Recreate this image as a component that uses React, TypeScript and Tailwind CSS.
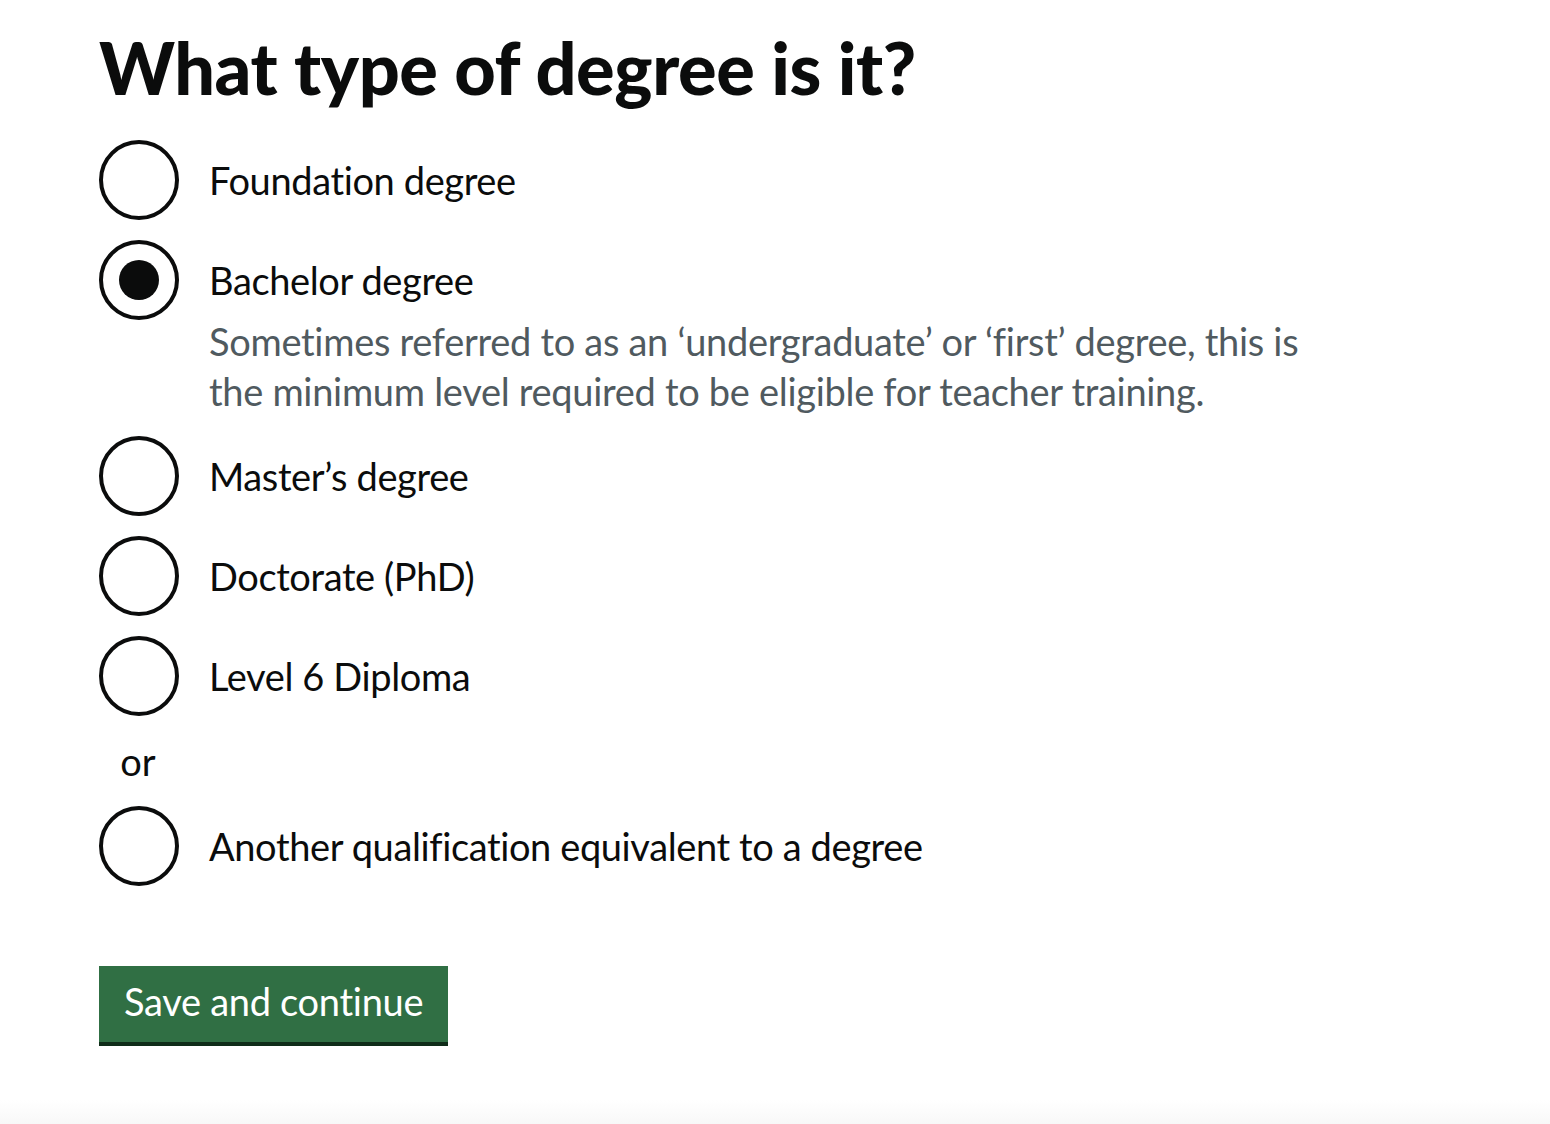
import React from "react";

interface RadioOption {
  label: string;
  hint?: string;
  checked?: boolean;
  dividerBefore?: boolean;
}

const options: RadioOption[] = [
  { label: "Foundation degree" },
  {
    label: "Bachelor degree",
    checked: true,
    hint: "Sometimes referred to as an ‘undergraduate’ or ‘first’ degree, this is the minimum level required to be eligible for teacher training.",
  },
  { label: "Master’s degree" },
  { label: "Doctorate (PhD)" },
  { label: "Level 6 Diploma" },
  { label: "Another qualification equivalent to a degree", dividerBefore: true },
];

function RadioItem({ option }: { option: RadioOption }) {
  return (
    <div className="flex min-h-[80px]">
      <div className="w-[80px] h-[80px] shrink-0 rounded-full border-[4px] border-[#0b0c0c] flex items-center justify-center">
        {option.checked && <div className="w-[40px] h-[40px] rounded-full bg-[#0b0c0c]" />}
      </div>
      <div className="flex flex-col">
        <label className="pl-[30px] pt-[15px] pb-[11px] text-[38px] leading-[50px] tracking-[-0.38px] text-[#0b0c0c]">
          {option.label}
        </label>
        {option.hint && (
          <div className="pl-[30px] w-[1150px] text-[38px] leading-[50px] tracking-[-0.3px] text-[#505a5f]">
            {option.hint}
          </div>
        )}
      </div>
    </div>
  );
}

export default function App() {
  return (
    <div
      className="min-h-[1124px] flex flex-col bg-white text-[#0b0c0c] [font-variant-ligatures:none]"
      style={{ fontFamily: "Lato, 'Noto Sans', sans-serif" }}
    >
      <main className="flex-1 pl-[99px] pt-[27px]">
        <h1 className="text-[72px] leading-[80px] font-black tracking-[-0.4px]">
          What type of degree is it?
        </h1>
        <div className="mt-[33px] flex flex-col gap-[20px]">
          {options.map((option) => (
            <React.Fragment key={option.label}>
              {option.dividerBefore && (
                <div className="w-[80px] text-center text-[38px] leading-[50px] pr-[2px]">or</div>
              )}
              <RadioItem option={option} />
            </React.Fragment>
          ))}
        </div>
        <button className="mt-[80px] h-[76px] px-[25px] pt-[10px] flex items-start bg-[#306f44] text-white text-[38px] leading-[50px] tracking-[-0.3px] shadow-[0_4px_0_#0f2c19]">
          Save and continue
        </button>
      </main>
      <div className="h-[24px] bg-gradient-to-b from-white to-[#f8f8f8]" />
    </div>
  );
}
